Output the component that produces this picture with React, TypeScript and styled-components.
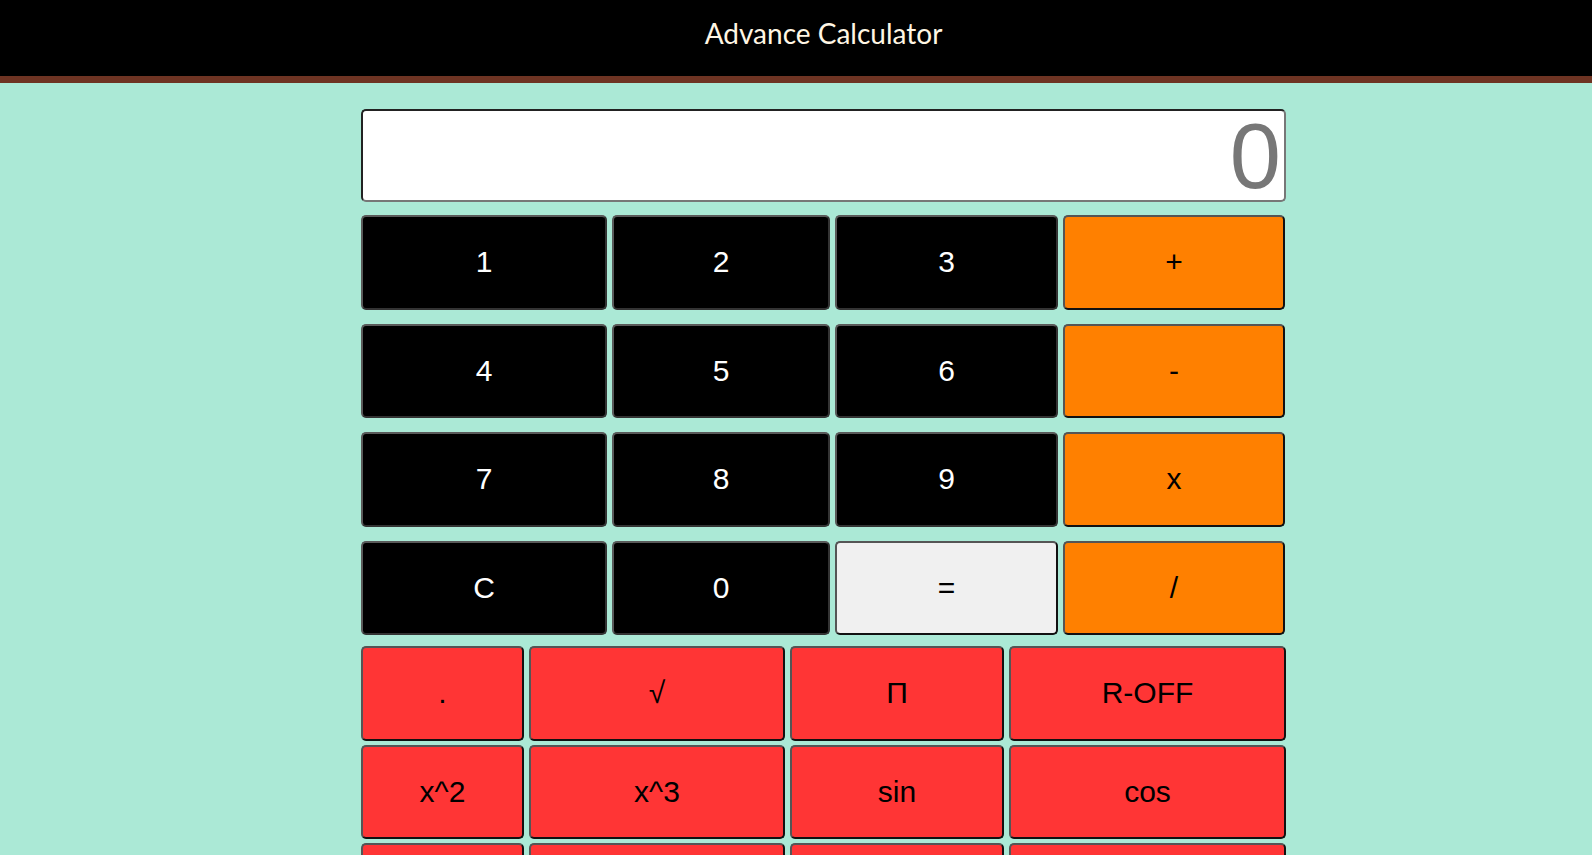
import React, { useState } from 'react';
import styled, { createGlobalStyle, css } from 'styled-components';

const GlobalStyle = createGlobalStyle`
    html, body {
        margin: 0;
        padding: 0;
        overflow-x: hidden;
        background: #abe9d6;
    }
`;

const Page = styled.div`
    width: 1647px;
    min-height: 855px;
    background: #abe9d6;
    font-family: 'Liberation Sans', Arial, sans-serif;
`;

const Header = styled.header`
    height: 76px;
    background: #000;
    border-bottom: 7px solid #6e3423;
    display: flex;
    align-items: center;
    justify-content: center;
`;

const Title = styled.h1`
    margin: 0;
    padding-bottom: 10px;
    font-family: Lato, 'Open Sans', sans-serif;
    font-weight: 400;
    font-size: 28px;
    color: #fff6e4;
`;

const Calculator = styled.main`
    width: 925px;
    margin: 26px auto 0;
    display: flex;
    flex-direction: column;
`;

const Display = styled.div`
    height: 89px;
    background: #fff;
    border: 2px solid;
    border-color: #222 #777 #777 #222;
    border-radius: 5px;
    display: flex;
    align-items: center;
    justify-content: flex-end;
    padding-right: 3px;
    font-size: 92px;
    line-height: 1;
    color: #777;
`;

const MainPad = styled.div`
    margin-top: 13px;
    display: grid;
    grid-template-columns: 246px 218px 223px 222px;
    grid-auto-rows: 94.5px;
    column-gap: 5px;
    row-gap: 14px;
`;

const SciencePad = styled.div`
    margin-top: 11px;
    display: grid;
    grid-template-columns: 163px 256px 214px 277px;
    grid-auto-rows: 94.5px;
    column-gap: 5px;
    row-gap: 4px;
`;

type Kind = 'digit' | 'op' | 'equal' | 'fn';

const kinds = {
    digit: css`
        background: #000;
        color: #fff;
        border-color: #5a5a5a #333 #333 #5a5a5a;
    `,
    op: css`
        background: #ff8000;
        color: #000;
    `,
    equal: css`
        background: #f0f0f0;
        color: #000;
    `,
    fn: css`
        background: #ff3535;
        color: #000;
    `,
};

const Key = styled.button<{ $kind: Kind }>`
    margin: 0;
    padding: 0;
    border: 2px solid;
    border-color: #555 #111 #111 #555;
    border-radius: 5px;
    font-family: 'Liberation Sans', Arial, sans-serif;
    font-size: 30px;
    cursor: pointer;
    ${(p) => kinds[p.$kind]}
`;

const mainKeys: [string, Kind][] = [
    ['1', 'digit'], ['2', 'digit'], ['3', 'digit'], ['+', 'op'],
    ['4', 'digit'], ['5', 'digit'], ['6', 'digit'], ['-', 'op'],
    ['7', 'digit'], ['8', 'digit'], ['9', 'digit'], ['x', 'op'],
    ['C', 'digit'], ['0', 'digit'], ['=', 'equal'], ['/', 'op'],
];

const sciKeys = ['.', '√', 'Π', 'R-OFF', 'x^2', 'x^3', 'sin', 'cos', 'tan', 'log', 'ln', 'x^y'];

const App: React.FC = () => {
    const [value, setValue] = useState('0');

    const press = (key: string) => {
        if (key === 'C') return setValue('0');
        if (/^[0-9]$/.test(key)) setValue((v) => (v === '0' ? key : v + key));
    };

    return (
        <Page>
            <GlobalStyle />
            <Header>
                <Title>Advance Calculator</Title>
            </Header>
            <Calculator>
                <Display>{value}</Display>
                <MainPad>
                    {mainKeys.map(([label, kind]) => (
                        <Key key={label} $kind={kind} onClick={() => press(label)}>
                            {label}
                        </Key>
                    ))}
                </MainPad>
                <SciencePad>
                    {sciKeys.map((label) => (
                        <Key key={label} $kind="fn" onClick={() => press(label)}>
                            {label}
                        </Key>
                    ))}
                </SciencePad>
            </Calculator>
        </Page>
    );
};

export default App;
